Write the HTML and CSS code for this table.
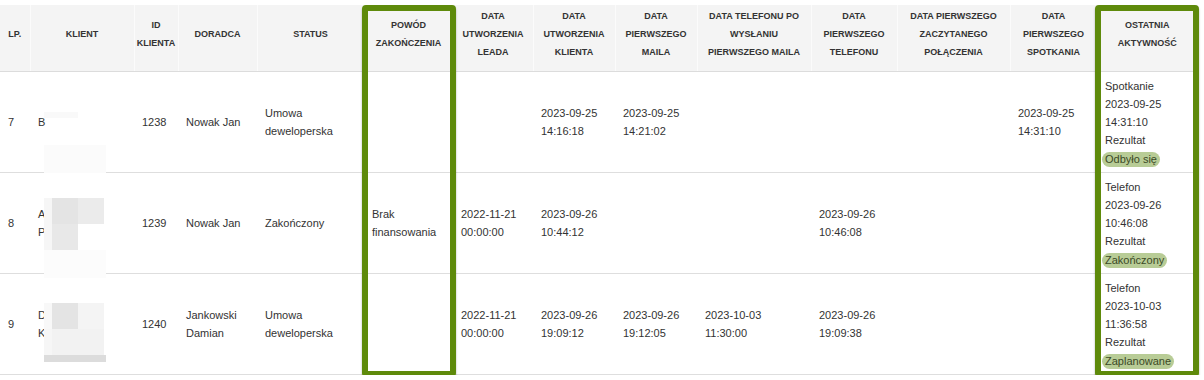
FILE: index.html
```html
<!DOCTYPE html>
<html lang="pl">
<head>
<meta charset="utf-8">
<title>Klienci</title>
<link rel="stylesheet" href="styles.css">
</head>
<body>
<div class="wrap">
  <table class="grid">
    <colgroup>
      <col class="c-lp"><col class="c-klient"><col class="c-id"><col class="c-doradca"><col class="c-status"><col class="c-powod"><col class="c-d80"><col class="c-d82"><col class="c-d82"><col class="c-d114"><col class="c-d86"><col class="c-d113"><col class="c-d87"><col class="c-last">
    </colgroup>
    <thead>
      <tr>
        <th>LP.</th>
        <th>KLIENT</th>
        <th>ID KLIENTA</th>
        <th>DORADCA</th>
        <th>STATUS</th>
        <th>POWÓD ZAKOŃCZENIA</th>
        <th>DATA UTWORZENIA LEADA</th>
        <th>DATA UTWORZENIA KLIENTA</th>
        <th>DATA PIERWSZEGO MAILA</th>
        <th>DATA TELEFONU PO WYSŁANIU PIERWSZEGO MAILA</th>
        <th>DATA PIERWSZEGO TELEFONU</th>
        <th>DATA PIERWSZEGO ZACZYTANEGO POŁĄCZENIA</th>
        <th>DATA PIERWSZEGO SPOTKANIA</th>
        <th>OSTATNIA AKTYWNOŚĆ</th>
      </tr>
    </thead>
    <tbody>
      <tr>
        <td>7</td>
        <td class="client">B
          <span class="mosaic m1a"></span>
          <span class="mosaic m1b"></span>
        </td>
        <td>1238</td>
        <td>Nowak Jan</td>
        <td>Umowa deweloperska</td>
        <td></td>
        <td></td>
        <td>2023-09-25<br>14:16:18</td>
        <td>2023-09-25<br>14:21:02</td>
        <td></td>
        <td></td>
        <td></td>
        <td>2023-09-25<br>14:31:10</td>
        <td class="last">Spotkanie<br>2023-09-25<br>14:31:10<br>Rezultat<br><span class="badge">Odbyło się</span></td>
      </tr>
      <tr>
        <td>8</td>
        <td class="client">A<br>P
          <span class="mosaic-grid m2">
            <span class="t1"></span><span class="t4"></span><span class="t3"></span>
            <span class="t1"></span><span class="t5"></span><span class="t0"></span>
          </span>
          <span class="mosaic m2b"></span>
        </td>
        <td>1239</td>
        <td>Nowak Jan</td>
        <td>Zakończony</td>
        <td>Brak finansowania</td>
        <td>2022-11-21<br>00:00:00</td>
        <td>2023-09-26<br>10:44:12</td>
        <td></td>
        <td></td>
        <td>2023-09-26<br>10:46:08</td>
        <td></td>
        <td></td>
        <td class="last">Telefon<br>2023-09-26<br>10:46:08<br>Rezultat<br><span class="badge">Zakończony</span></td>
      </tr>
      <tr>
        <td>9</td>
        <td class="client">D<br>K
          <span class="mosaic-grid m3">
            <span class="t2"></span><span class="t4"></span><span class="t6"></span>
            <span class="t1"></span><span class="t7"></span><span class="t7"></span>
          </span>
          <span class="mosaic m3b"></span>
        </td>
        <td>1240</td>
        <td>Jankowski Damian</td>
        <td>Umowa deweloperska</td>
        <td></td>
        <td>2022-11-21<br>00:00:00</td>
        <td>2023-09-26<br>19:09:12</td>
        <td>2023-09-26<br>19:12:05</td>
        <td>2023-10-03<br>11:30:00</td>
        <td>2023-09-26<br>19:09:38</td>
        <td></td>
        <td></td>
        <td class="last">Telefon<br>2023-10-03<br>11:36:58<br>Rezultat<br><span class="badge">Zaplanowane</span></td>
      </tr>
    </tbody>
  </table>
  <div class="highlight hl-powod"></div>
  <div class="highlight hl-last"></div>
</div>
</body>
</html>
```

FILE: styles.css
```css
html, body {
  margin: 0;
  padding: 0;
  background: #fff;
}

body {
  font-family: "Liberation Sans", Arial, sans-serif;
  font-size: 11px;
  line-height: 18px;
  color: #333;
}

.wrap {
  position: relative;
  padding-top: 5px;
  width: 1204px;
}

.grid {
  border-collapse: collapse;
  table-layout: fixed;
  width: 1197px;
}

.c-lp { width: 30px; }
.c-klient { width: 104px; }
.c-id { width: 44px; }
.c-doradca { width: 79px; }
.c-status { width: 107px; }
.c-powod { width: 89px; }
.c-d80 { width: 80px; }
.c-d82 { width: 82px; }
.c-d114 { width: 114px; }
.c-d86 { width: 86px; }
.c-d113 { width: 113px; }
.c-d87 { width: 87px; }
.c-last { width: 100px; }

.grid th {
  background: #f4f4f4;
  font-size: 9px;
  font-weight: bold;
  line-height: 18px;
  color: #333;
  text-align: center;
  vertical-align: middle;
  padding: 2px 2px 10px;
  border-left: 1px solid #fbfbfb;
  border-bottom: 1px solid #dcdcdc;
  height: 54px;
}

.grid th:first-child {
  border-left: none;
}

.grid td {
  padding: 5px 8px;
  vertical-align: middle;
  border-top: 1px solid #dedede;
  border-bottom: 1px solid #dedede;
  text-align: left;
  word-wrap: break-word;
}

.client {
  position: relative;
}

.mosaic {
  position: absolute;
  left: 14px;
  z-index: 1;
}

.m1a { top: 40px; width: 34px; height: 6px; background: #f9f9f9; }
.m1b { top: 73px; width: 62px; height: 28px; background: #fbfbfb; }
.m2b { top: 77px; width: 62px; height: 28px; background: #fcfcfc; }
.m3b { top: 81px; width: 62px; height: 7px; background: #dcdcdc; }

.mosaic-grid {
  position: absolute;
  left: 14px;
  display: grid;
  grid-template-columns: 8px 26px 26px;
  grid-auto-rows: 26px;
  z-index: 1;
}

.m2 { top: 25px; }
.m3 { top: 29px; }

.t0 { background: #ffffff; }
.t1 { background: #f6f6f6; }
.t2 { background: #f8f8f8; }
.t3 { background: #ebebeb; }
.t4 { background: #e4e4e4; }
.t5 { background: #e8e8e8; }
.t6 { background: #f4f4f4; }
.t7 { background: #f2f2f2; }

.badge {
  display: inline-block;
  background: #b8cc96;
  color: #3b4a26;
  border-radius: 8px;
  padding: 0 3px;
  margin-left: -3px;
  line-height: 15px;
  vertical-align: middle;
}

.highlight {
  position: absolute;
  top: 5px;
  height: 372px;
  box-sizing: border-box;
  border: 6px solid #5e8a0b;
  border-radius: 4px;
  box-shadow: 0 2px 2px rgba(0, 0, 0, 0.35);
  z-index: 2;
}

.hl-powod {
  left: 362px;
  width: 94px;
}

.hl-last {
  left: 1095px;
  width: 104px;
}
```
